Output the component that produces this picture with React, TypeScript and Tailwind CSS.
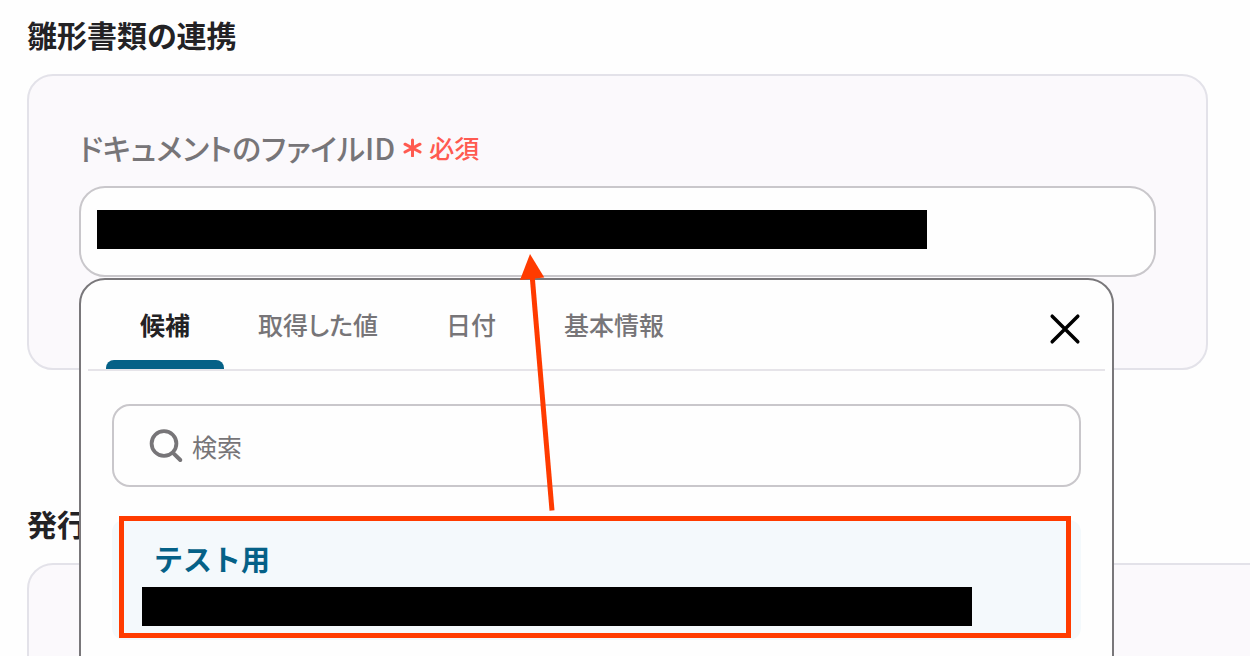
import { useState } from "react";

const tabs = ["候補", "取得した値", "日付", "基本情報"];

function SearchIcon() {
  return (
    <svg className="h-9 w-9 shrink-0" viewBox="0 0 36 36" fill="none" stroke="#777578" aria-hidden="true">
      <circle cx="16" cy="15.5" r="12.4" strokeWidth="3.8" />
      <path d="M25 24.8 L32.3 32" strokeWidth="4" strokeLinecap="round" />
    </svg>
  );
}

function CloseIcon() {
  return (
    <svg className="h-8 w-8" viewBox="0 0 32 32" fill="none" stroke="#000" strokeWidth="3.5" strokeLinecap="round" aria-hidden="true">
      <path d="M3.2 3.2 L28.8 28.8 M28.8 3.2 L3.2 28.8" />
    </svg>
  );
}

function RequiredMark() {
  return (
    <svg className="h-5 w-5" viewBox="0 0 20 20" fill="none" stroke="#ff5a50" strokeWidth="3" strokeLinecap="round" aria-hidden="true">
      <path d="M9.5 3 V19 M2 7.2 L17 15 M17 7.2 L2 15" />
    </svg>
  );
}

function SuggestionPopover() {
  const [active, setActive] = useState(0);
  return (
    <div className="absolute top-full right-[42px] left-0 z-10 mt-px h-[480px] rounded-t-[26px] border-2 border-[#79777a] bg-[#fefefe]">
      <div className="mx-[7px] flex items-start justify-between border-b-2 border-[#e6e4e9] pr-6 pl-[18px]">
        <div role="tablist" className="flex">
          {tabs.map((tab, i) => (
            <button
              key={tab}
              type="button"
              role="tab"
              aria-selected={i === active}
              onClick={() => setActive(i)}
              className={
                i === active
                  ? "flex flex-col pt-6 text-[25px] leading-10 font-bold text-[#232225]"
                  : "flex flex-col pt-6 text-[25px] leading-10 font-medium text-[#777578]"
              }
            >
              <span className="px-[34px] whitespace-nowrap">{tab}</span>
              <span
                className={
                  i === active
                    ? "mt-4 h-[9px] w-full rounded-t-lg bg-[#056187]"
                    : "mt-4 h-[9px] w-full"
                }
              />
            </button>
          ))}
        </div>
        <button type="button" aria-label="閉じる" className="mt-[33px]">
          <CloseIcon />
        </button>
      </div>

      <div className="mx-[31px] mt-[33px]">
        <label className="flex h-[83px] items-center gap-2 rounded-[18px] border-2 border-[#c9c7cb] pl-[34px]">
          <SearchIcon />
          <input
            type="search"
            aria-label="検索"
            placeholder="検索"
            className="min-w-0 flex-1 bg-transparent text-[25px] leading-10 font-normal text-[#777578] outline-none placeholder:text-[#777578]"
          />
        </label>

        <div className="relative mt-[33px]">
          <button type="button" className="block w-full rounded-xl bg-[#f4f9fc] px-[30px] pt-[18px] pb-3.5 text-left">
            <span className="block px-3 text-[29px] leading-10 font-bold text-[#056187] [font-feature-settings:normal]">テスト用</span>
            <span className="mt-[9px] block h-[39px] max-w-[830px] bg-black" />
          </button>
          <div className="pointer-events-none absolute -top-1 right-2.5 bottom-0.5 left-[7px] border-5 border-[#ff3b00]" />
        </div>
      </div>

      <svg
        className="pointer-events-none absolute -top-[26px] left-[437px] h-[260px] w-10"
        viewBox="0 0 40 260"
        aria-hidden="true"
      >
        <path d="M14 20 L34 256.5" stroke="#ff3b00" strokeWidth="5" />
        <path d="M12 0 L26.3 23.5 L2 26 Z" fill="#ff3b00" />
      </svg>
    </div>
  );
}

export default function App() {
  return (
    <main
      lang="ja"
      className="h-screen overflow-hidden bg-[#fefefe] pt-3.5 pr-[42px] pl-[27px] font-['Noto_Sans_CJK_JP',sans-serif] [font-feature-settings:'palt']"
    >
      <section>
        <h2 className="text-[30px] leading-10 font-bold text-[#232225]">雛形書類の連携</h2>
        <div className="mt-5 rounded-[26px] border-2 border-[#e3e2e9] bg-[#fbf9fc] px-[50px] pt-[51px] pb-[91px]">
          <label htmlFor="file-id" className="flex items-center leading-10">
            <span className="text-[30px] font-medium text-[#777578]">ドキュメントのファイルID</span>
            <span className="ml-2 flex items-center gap-1.5 text-[25px] font-medium text-[#ff5a50]">
              <RequiredMark />
              必須
            </span>
          </label>
          <div className="relative mt-[19px]">
            <div className="flex h-[91px] items-center rounded-[26px] border-2 border-[#c9c7cb] bg-[#fefefe] px-4 pb-1">
              <span className="h-[39px] w-[830px] bg-black" />
              <input id="file-id" type="text" className="h-full min-w-0 flex-1 bg-transparent pl-4 text-[25px] outline-none" />
            </div>
            <SuggestionPopover />
          </div>
        </div>
      </section>

      <section className="mt-[133px]">
        <h2 className="text-[30px] leading-10 font-bold text-[#232225]">発行</h2>
        <div className="mt-5 -mr-20 h-40 rounded-[26px] border-2 border-[#e3e2e9] bg-[#fbf9fc]" />
      </section>
    </main>
  );
}
